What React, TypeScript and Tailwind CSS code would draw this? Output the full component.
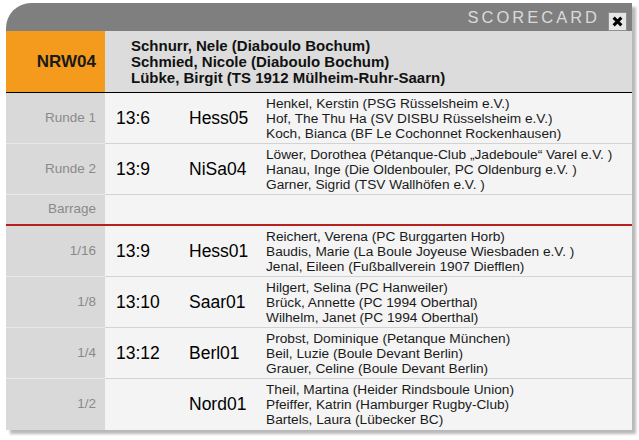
const rounds = [
  {
    label: "Runde 1",
    score: "13:6",
    team: "Hess05",
    players: [
      "Henkel, Kerstin (PSG Rüsselsheim e.V.)",
      "Hof, The Thu Ha (SV DISBU Rüsselsheim e.V.)",
      "Koch, Bianca (BF Le Cochonnet Rockenhausen)",
    ],
  },
  {
    label: "Runde 2",
    score: "13:9",
    team: "NiSa04",
    players: [
      "Löwer, Dorothea (Pétanque-Club „Jadeboule“ Varel e.V. )",
      "Hanau, Inge (Die Oldenbouler, PC Oldenburg e.V. )",
      "Garner, Sigrid (TSV Wallhöfen e.V. )",
    ],
  },
];

const finals = [
  {
    label: "1/16",
    score: "13:9",
    team: "Hess01",
    players: [
      "Reichert, Verena (PC Burggarten Horb)",
      "Baudis, Marie (La Boule Joyeuse Wiesbaden e.V. )",
      "Jenal, Eileen (Fußballverein 1907 Diefflen)",
    ],
  },
  {
    label: "1/8",
    score: "13:10",
    team: "Saar01",
    players: [
      "Hilgert, Selina (PC Hanweiler)",
      "Brück, Annette (PC 1994 Oberthal)",
      "Wilhelm, Janet (PC 1994 Oberthal)",
    ],
  },
  {
    label: "1/4",
    score: "13:12",
    team: "Berl01",
    players: [
      "Probst, Dominique (Petanque München)",
      "Beil, Luzie (Boule Devant Berlin)",
      "Grauer, Celine (Boule Devant Berlin)",
    ],
  },
  {
    label: "1/2",
    score: "",
    team: "Nord01",
    players: [
      "Theil, Martina (Heider Rindsboule Union)",
      "Pfeiffer, Katrin (Hamburger Rugby-Club)",
      "Bartels, Laura (Lübecker BC)",
    ],
  },
];

type Round = (typeof rounds)[number];

function MatchRow({ round, last }: { round: Round; last?: boolean }) {
  return (
    <div className="flex h-[51px]">
      <div
        className={
          "flex w-[99px] shrink-0 items-center justify-end bg-[#d9d9d9] pr-[9px] text-[13.5px] text-[#8a8a8a] " +
          (last ? "" : "border-b border-[#e9e9e9]")
        }
      >
        {round.label}
      </div>
      <div
        className={
          "flex flex-1 items-center bg-[#f4f4f4] " +
          (last ? "" : "border-b border-[#d2d2d2]")
        }
      >
        <div className="w-[73px] shrink-0 pl-[11px] text-[17.5px] text-black">
          {round.score}
        </div>
        <div className="w-[77px] shrink-0 pl-[11px] text-[17.5px] text-black">
          {round.team}
        </div>
        <div className="pl-[11px] text-[13.7px] leading-[15px] text-[#1a1a1a]">
          {round.players.map((p) => (
            <div key={p} className="whitespace-nowrap">
              {p}
            </div>
          ))}
        </div>
      </div>
    </div>
  );
}

export default function App() {
  return (
    <div
      className="h-[440px] w-[639px] overflow-hidden bg-white pl-[6px] pt-[3px]"
      style={{ fontFamily: '"Liberation Sans", Arial, sans-serif' }}
    >
      <div className="w-[626px] rounded-tl-[25px] shadow-[4px_4px_3px_rgba(0,0,0,0.28)]">
        {/* title bar */}
        <div className="flex h-[28px] items-center justify-end rounded-tl-[25px] bg-[#7f7f7f] pr-[5px]">
          <span className="mr-[8px] mt-[1px] text-[16.5px] tracking-[3px] text-[#dadada]">
            SCORECARD
          </span>
          <button className="mt-[8px] flex h-[19px] w-[19px] items-center justify-center border border-[#8f8f8f] bg-[#e6e6e6]">
            <svg viewBox="0 0 10 10" className="size-[11px]">
              <path
                d="M1.5 1.5 L8.5 8.5 M8.5 1.5 L1.5 8.5"
                stroke="#000"
                strokeWidth="2.8"
              />
            </svg>
          </button>
        </div>

        {/* team */}
        <div className="flex h-[62px] border-b border-black">
          <div className="flex w-[99px] shrink-0 items-center justify-end bg-[#f49a1d] pr-[9px] text-[17px] font-bold text-[#1a1a1a]">
            NRW04
          </div>
          <div className="flex flex-1 flex-col justify-center bg-[#dcdcdc] pl-[26px] text-[15px] font-bold leading-[16px] text-[#111]">
            <div>Schnurr, Nele (Diaboulo Bochum)</div>
            <div>Schmied, Nicole (Diaboulo Bochum)</div>
            <div>Lübke, Birgit (TS 1912 Mülheim-Ruhr-Saarn)</div>
          </div>
        </div>

        {rounds.map((r) => (
          <MatchRow key={r.label} round={r} />
        ))}

        <div className="flex h-[29px]">
          <div className="flex w-[99px] shrink-0 items-center justify-end bg-[#d9d9d9] pr-[9px] text-[13.5px] text-[#8a8a8a]">
            Barrage
          </div>
          <div className="flex-1 bg-[#f4f4f4]" />
        </div>

        <div className="h-[2px] bg-[#b8201f]" />

        {finals.map((r, i) => (
          <MatchRow key={r.label} round={r} last={i === finals.length - 1} />
        ))}
      </div>
    </div>
  );
}
